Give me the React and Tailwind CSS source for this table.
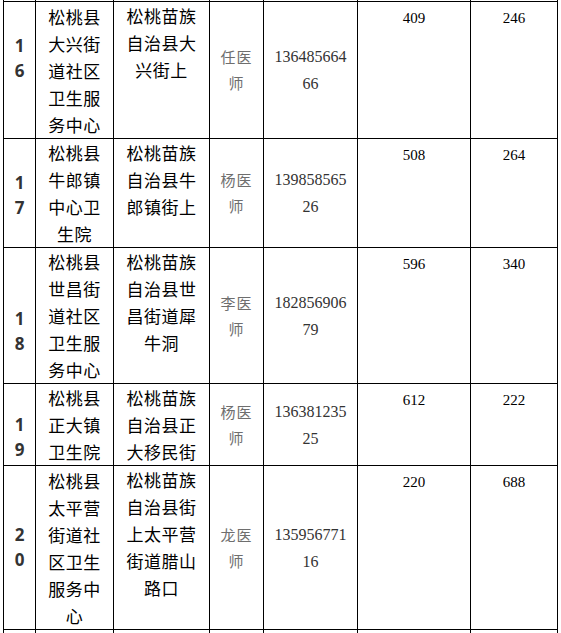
const rows = [
  {
    no: ['1', '6'],
    name: '松桃县大兴街道社区卫生服务中心',
    addr: '松桃苗族自治县大兴街上',
    doc: '任医师',
    phone: '13648566466',
    a: '409',
    b: '246',
    noPad: 'pb-[23px]',
  },
  {
    no: ['1', '7'],
    name: '松桃县牛郎镇中心卫生院',
    addr: '松桃苗族自治县牛郎镇街上',
    doc: '杨医师',
    phone: '13985856526',
    a: '508',
    b: '264',
    noPad: 'pt-[5px]',
  },
  {
    no: ['1', '8'],
    name: '松桃县世昌街道社区卫生服务中心',
    addr: '松桃苗族自治县世昌街道犀牛洞',
    doc: '李医师',
    phone: '18285690679',
    a: '596',
    b: '340',
    noPad: 'pt-[32px]',
  },
  {
    no: ['1', '9'],
    name: '松桃县正大镇卫生院',
    addr: '松桃苗族自治县正大移民街',
    doc: '杨医师',
    phone: '13638123525',
    a: '612',
    b: '222',
    noPad: 'pt-[26px]',
  },
  {
    no: ['2', '0'],
    name: '松桃县太平营街道社区卫生服务中心',
    addr: '松桃苗族自治县街上太平营街道腊山路口',
    doc: '龙医师',
    phone: '13595677116',
    a: '220',
    b: '688',
    noPad: '',
  },
];

const cjk = "font-['Noto_Sans_CJK_SC',sans-serif]";
const num = "font-['Liberation_Serif','Noto_Sans_CJK_SC',serif]";

function EmptyRow() {
  return (
    <>
      {[0, 1, 2, 3, 4, 5, 6].map((i) => (
        <div key={i} className="bg-white" />
      ))}
    </>
  );
}

export default function App() {
  return (
    <div className="h-[633px] w-[561px] overflow-hidden bg-white">
      <div className="ml-[3px] grid w-[555px] grid-cols-[31px_77px_95px_53px_93px_112px_86px] grid-rows-[1px_136px_108px_135px_81px_163px_10px] gap-px bg-black px-px">
        <EmptyRow />
        {rows.map((r, idx) => (
          <div key={idx} className="contents">
            {/* number */}
            <div className={`flex flex-col items-center justify-center bg-white ${r.noPad}`}>
              {r.no.map((d, i) => (
                <span key={i} className="font-['Noto_Sans',sans-serif] text-[17px] font-bold leading-[24.5px] text-[#333]">
                  {d}
                </span>
              ))}
            </div>
            {/* name */}
            <div className={`flex items-center justify-center bg-white px-[6px] ${cjk}`}>
              <p className="text-center text-[17px] leading-[27px] tracking-[0.5px] text-black">{r.name}</p>
            </div>
            {/* address */}
            <div className={`bg-white px-[6px] ${cjk}`}>
              <p className="text-center text-[17px] leading-[27px] tracking-[0.5px] text-black">{r.addr}</p>
            </div>
            {/* doctor */}
            <div className={`flex items-center justify-center bg-white px-[3px] ${cjk}`}>
              <p className="text-center text-[15px] leading-[26px] tracking-[1px] text-[#6e6e6e]">{r.doc}</p>
            </div>
            {/* phone */}
            <div className={`flex items-center justify-center bg-white px-[7px] ${num}`}>
              <p className="break-all text-center text-[16px] leading-[27px] text-[#333]">{r.phone}</p>
            </div>
            <div className={`bg-white pt-[3px] text-center text-[15px] leading-[27px] text-black ${num}`}>{r.a}</div>
            <div className={`bg-white pt-[3px] text-center text-[15px] leading-[27px] text-black ${num}`}>{r.b}</div>
          </div>
        ))}
        <EmptyRow />
      </div>
    </div>
  );
}
